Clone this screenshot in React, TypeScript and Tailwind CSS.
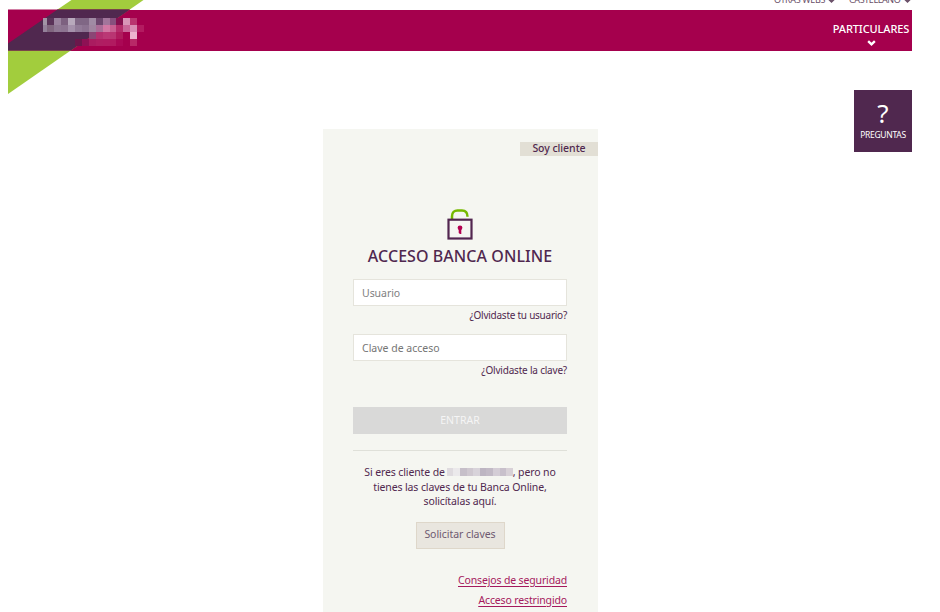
const logoRows: { y: number; h: number; cells: [number, number, string][] }[] = [
  {
    y: 18,
    h: 7,
    cells: [
      [43, 4, '#a294a6'], [47, 7, '#5a3359'], [54, 7, '#9b839f'], [61, 7, '#7d6180'],
      [68, 7, '#b8a9bc'], [75, 7, '#806785'], [82, 7, '#806785'], [89, 7, '#a08ba4'],
      [96, 7, '#6d476e'], [103, 7, '#a2759b'], [110, 6, '#86507d'], [116, 7, '#84104f'],
      [123, 7, '#d995b8'], [130, 7, '#b9356f'],
    ],
  },
  {
    y: 25,
    h: 7,
    cells: [
      [43, 4, '#94819a'], [47, 7, '#80667f'], [54, 7, '#8f7893'], [61, 7, '#8d7491'],
      [68, 7, '#a591ab'], [75, 7, '#927b98'], [82, 7, '#8c7391'], [89, 7, '#a085a0'],
      [96, 7, '#aa6d97'], [103, 7, '#d278a4'], [110, 6, '#c85f91'], [116, 7, '#b52c6b'],
      [123, 7, '#c96799'], [130, 7, '#d98fb5'], [137, 7, '#b31b60'],
    ],
  },
  {
    y: 32,
    h: 7,
    cells: [
      [89, 7, '#8b4675'], [96, 7, '#b3306f'], [103, 7, '#ba3875'], [110, 6, '#b93572'],
      [116, 7, '#af1b5d'], [130, 7, '#edb3ce'],
    ],
  },
  {
    y: 39,
    h: 7,
    cells: [
      [75, 7, '#6b174b'], [82, 7, '#8e1154'], [89, 7, '#aa1c60'], [96, 7, '#af1e62'],
      [103, 7, '#b11c62'], [110, 6, '#b11a60'], [116, 7, '#aa0855'], [130, 7, '#b82967'],
    ],
  },
];

const nameMosaic = ['#dfdbdf', '#ebe9eb', '#c6bfc9', '#cfc8d0', '#d8d3da', '#bdb5c2', '#c2bac6', '#d4cdd6', '#c8c0cb', '#d8d1d7'];

function BrandStripe() {
  return (
    <svg className="absolute left-0 top-0" width="150" height="96" viewBox="0 0 150 96" aria-hidden="true">
      <path d="M71.5 0H143.5L8 94V43Z" fill="#a2cd3d" />
      <path d="M8 9.5H130L70.5 50.6H8Z" fill="#a5004d" />
      <path d="M57.5 9.5H129.8L70.6 50.6H8V43.5Z" fill="#50284f" />
      <g shapeRendering="crispEdges">
        {logoRows.map((row) =>
          row.cells.map(([x, w, fill]) => (
            <rect key={`${x}-${row.y}`} x={x} y={row.y} width={w} height={row.h} fill={fill} />
          )),
        )}
      </g>
    </svg>
  );
}

function Chevron({ className }: { className: string }) {
  return (
    <svg className={className} viewBox="0 0 10 7" fill="none" stroke="currentColor" strokeWidth="2.8" aria-hidden="true">
      <path d="M1.1 1.4 5 5 8.9 1.4" />
    </svg>
  );
}

function Padlock() {
  return (
    <svg className="mx-auto block" width="26" height="32" viewBox="0 0 26 32" fill="none" aria-hidden="true">
      <path d="M5 10V7.2C5 3.5 7.4 1.5 10.5 1.5H15C18.2 1.5 20.5 3.6 20.5 7.8" stroke="#76b900" strokeWidth="2.5" />
      <rect x="1.5" y="10.7" width="23" height="18.8" stroke="#522650" strokeWidth="2.2" />
      <circle cx="13" cy="18.8" r="2.4" fill="#b3004f" />
      <path d="M11.7 19H14.3V25H13L11.7 24Z" fill="#b3004f" />
    </svg>
  );
}

export default function App() {
  return (
    <div className="relative h-[612px] w-[940px] overflow-hidden bg-white font-['Noto_Sans','Open_Sans',sans-serif] text-[#50284f]">
      <header className="ml-2 w-[904px]">
        <div className="flex h-[9.5px] justify-end overflow-hidden text-[9px] leading-[12px] text-[#6a5069]">
          <div className="-mt-[6px] flex h-3 items-center">
            <span className="w-[51px] whitespace-nowrap tracking-[-0.35px]">OTRAS WEBS</span>
            <Chevron className="ml-[3px] h-[5px] w-[7px]" />
            <span className="ml-[14px] w-[52px] whitespace-nowrap tracking-[-0.4px]">CASTELLANO</span>
            <Chevron className="ml-[3px] mr-px h-[5px] w-[7px]" />
          </div>
        </div>
        <nav className="flex h-[41px] justify-end bg-[#a5004d] text-white">
          <div className="mr-[3px] flex w-[76px] flex-col items-center pt-[12px]">
            <span className="whitespace-nowrap text-[11px] font-medium leading-[14px] tracking-[-0.1px]">PARTICULARES</span>
            <Chevron className="mt-[4px] h-[6px] w-[9px]" />
          </div>
        </nav>
      </header>
      <BrandStripe />

      <main className="flex items-start">
        <section className="ml-[323px] mt-[78px] h-[484px] w-[275px] shrink-0 bg-[#f5f6f1]">
          <div className="flex justify-end pt-[13px]">
            <div className="h-[14.5px] w-[78px] bg-[#e2dfd5] text-center text-[10.5px] font-medium leading-[12px] tracking-[-0.05px]">Soy cliente</div>
          </div>
          <div className="ml-[30px] mr-[31px]">
            <div className="pt-[52px]">
              <div className="h-8 translate-y-[1px]"><Padlock /></div>
            </div>
            <h1 className="mt-[4px] whitespace-nowrap text-center text-[16px] font-medium leading-6 tracking-[0.06px]">ACCESO BANCA ONLINE</h1>
            <input
              placeholder="Usuario"
              className="mt-[11px] block h-[27px] w-full border border-[#e5e4dc] bg-white px-2 text-[10.5px] tracking-[-0.05px] placeholder:text-[#808080]"
            />
            <a className="mt-[2px] block text-right text-[10px] leading-[14px] tracking-[-0.25px]">¿Olvidaste tu usuario?</a>
            <input
              placeholder="Clave de acceso"
              className="mt-[12px] block h-[27px] w-full border border-[#e5e4dc] bg-white px-2 text-[10.5px] placeholder:text-[#757575]"
            />
            <a className="mt-[2px] block text-right text-[10px] leading-[14px] tracking-[-0.2px]">¿Olvidaste la clave?</a>
            <button className="mt-[30px] block h-[27px] w-full bg-[#d9d9d8] text-[10.5px] text-[#f5f5f5]">ENTRAR</button>
            <hr className="mt-[16px] border-[#dfe0d9]" />
            <div className="mt-[14px] text-center text-[10.5px] leading-[14.5px] tracking-[-0.12px]">
              <p className="flex items-center justify-center whitespace-nowrap">
                <span>Si eres cliente de</span>
                <span className="ml-[2px] flex h-[8px] w-[66px]">
                  {nameMosaic.map((color, i) => (
                    <span key={i} className="flex-1" style={{ backgroundColor: color }} />
                  ))}
                </span>
                <span>, pero no</span>
              </p>
              <p>tienes las claves de tu Banca Online,</p>
              <p>solicítalas aquí.</p>
            </div>
            <button className="mx-auto mt-[13px] block h-[27px] w-[89px] whitespace-nowrap border border-[#ded7ca] bg-[#e9e6df] text-[10.5px] tracking-[-0.05px] text-[#6e5970]">Solicitar claves</button>
            <div className="mt-[21px] flex flex-col items-end text-[10.5px] leading-[20px] tracking-[-0.15px] text-[#a5195d] underline underline-offset-2">
              <a>Consejos de seguridad</a>
              <a>Acceso restringido</a>
            </div>
          </div>
        </section>
        <aside className="ml-[256px] mt-[39px] flex h-[62.5px] w-[58px] flex-col items-center bg-[#50284f] text-white">
          <span className="mt-[9px] text-[26px] leading-[28px]">?</span>
          <span className="mt-px text-[8.5px] leading-[13px] tracking-[-0.3px]">PREGUNTAS</span>
        </aside>
      </main>
    </div>
  );
}
